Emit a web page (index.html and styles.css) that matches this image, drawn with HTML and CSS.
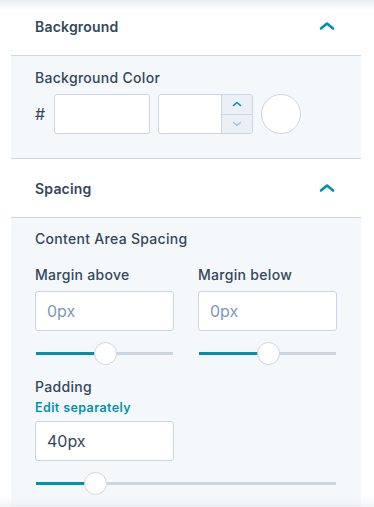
FILE: index.html
```html
<!DOCTYPE html>
<html lang="en">
<head>
    <meta charset="UTF-8">
    <meta name="viewport" content="width=device-width, initial-scale=1.0">
    <title>Module Styles</title>
    <link rel="stylesheet" href="styles.css">
</head>
<body>
    <div class="panel">
        <section class="group">
            <div class="group-head">
                <span>Background</span>
                <svg class="chevron" viewBox="0 0 16 16"><path d="M2 10.5 L8 5.5 L14 10.5"/></svg>
            </div>
            <div class="group-body">
                <div class="field-label">Background Color</div>
                <div class="color-row">
                    <span class="hash">#</span>
                    <input class="text-input hex" type="text">
                    <div class="number-input">
                        <input type="text">
                        <div class="stepper">
                            <span class="step up"><svg viewBox="0 0 12 12"><path d="M2.5 7.5 L6 4.5 L9.5 7.5"/></svg></span>
                            <span class="step down"><svg viewBox="0 0 12 12"><path d="M2.5 4.5 L6 7.5 L9.5 4.5"/></svg></span>
                        </div>
                    </div>
                    <span class="swatch"></span>
                </div>
            </div>
        </section>
        <section class="group">
            <div class="group-head">
                <span>Spacing</span>
                <svg class="chevron" viewBox="0 0 16 16"><path d="M2 10.5 L8 5.5 L14 10.5"/></svg>
            </div>
            <div class="group-body">
                <div class="field-label">Content Area Spacing</div>
                <div class="two-col">
                    <div class="col">
                        <div class="field-label">Margin above</div>
                        <input class="text-input" type="text" placeholder="0px">
                        <div class="slider">
                            <div class="track"><div class="fill" style="width: 50%"></div></div>
                            <div class="thumb" style="left: 50%"></div>
                        </div>
                    </div>
                    <div class="col">
                        <div class="field-label">Margin below</div>
                        <input class="text-input" type="text" placeholder="0px">
                        <div class="slider">
                            <div class="track"><div class="fill" style="width: 50%"></div></div>
                            <div class="thumb" style="left: 50%"></div>
                        </div>
                    </div>
                </div>
                <div class="field-label padding-label">Padding</div>
                <a class="edit-link" href="#">Edit separately</a>
                <input class="text-input narrow" type="text" value="40px">
                <div class="slider">
                    <div class="track"><div class="fill" style="width: 19.7%"></div></div>
                    <div class="thumb" style="left: 19.7%"></div>
                </div>
            </div>
        </section>
    </div>
    <div class="fade-top"></div>
    <div class="fade-bottom"></div>
</body>
</html>
```

FILE: styles.css
```css
body {
    margin: 0;
    background: #fff;
    font-family: Inter, "Noto Sans", Arial, sans-serif;
    color: #33475b;
    overflow: hidden;
}
.panel {
    margin: -3px 13px 0 11px;
    width: 350px;
}
.group-head {
    height: 58px;
    display: flex;
    align-items: center;
    justify-content: space-between;
    padding: 0 26px 0 24px;
    border-bottom: 1px solid #cbd6e2;
    font-size: 14px;
    font-weight: 600;
    letter-spacing: 0.2px;
}
.chevron {
    width: 16px;
    height: 16px;
}
.chevron path {
    fill: none;
    stroke: #0091ae;
    stroke-width: 2.6;
    stroke-linecap: round;
    stroke-linejoin: round;
}
.group-body {
    background: #f5f8fa;
    border-bottom: 1px solid #cbd6e2;
    padding: 12px 24px 24px;
}
.field-label {
    font-size: 14px;
    font-weight: 500;
    line-height: 20px;
    letter-spacing: 0.3px;
    margin-bottom: 6px;
}
.color-row {
    display: flex;
    align-items: center;
    gap: 8px;
}
.hash {
    width: 11px;
    font-size: 16px;
}
.text-input {
    display: block;
    box-sizing: border-box;
    height: 40px;
    width: 100%;
    border: 1px solid #cbd6e2;
    border-radius: 3px;
    background: #fff;
    padding: 0 11px;
    font-family: inherit;
    font-size: 16px;
    font-weight: 400;
    color: #33475b;
    outline: none;
}
.text-input::placeholder {
    color: #7c98b6;
}
.text-input.hex {
    width: 96px;
}
.text-input.narrow {
    width: 139px;
}
.number-input {
    display: flex;
    box-sizing: border-box;
    width: 95px;
    height: 40px;
    border: 1px solid #cbd6e2;
    border-radius: 3px;
    background: #fff;
    overflow: hidden;
}
.number-input input {
    flex: 1;
    min-width: 0;
    border: none;
    outline: none;
    background: transparent;
}
.stepper {
    width: 30px;
    display: flex;
    flex-direction: column;
    background: #eaf0f6;
    border-left: 1px solid #cbd6e2;
}
.step {
    flex: 1;
    display: flex;
    align-items: center;
    justify-content: center;
}
.step.up {
    border-bottom: 1px solid #cbd6e2;
}
.step svg {
    width: 12px;
    height: 12px;
}
.step path {
    fill: none;
    stroke-width: 1.6;
    stroke-linecap: round;
    stroke-linejoin: round;
}
.step.up path {
    stroke: #0091ae;
}
.step.down path {
    stroke: #b0c1d4;
}
.swatch {
    box-sizing: border-box;
    width: 40px;
    height: 40px;
    border-radius: 50%;
    border: 1px solid #cbd6e2;
    background: #fff;
}
.group:last-child .group-body {
    padding-top: 11px;
    padding-bottom: 11px;
}
.group:last-child .group-body > .field-label:first-child {
    margin-bottom: 16px;
}
.two-col {
    display: grid;
    grid-template-columns: 139px 139px;
    gap: 24px;
}
.slider {
    position: relative;
    height: 22px;
    margin-top: 11px;
    margin-right: 1px;
    margin-left: 1px;
}
.track {
    position: absolute;
    left: 0;
    right: 0;
    top: 10px;
    height: 3px;
    background: #cbd6e2;
}
.fill {
    height: 100%;
    background: #0091ae;
}
.thumb {
    position: absolute;
    top: 0;
    box-sizing: border-box;
    width: 23px;
    height: 23px;
    margin-left: -11px;
    border-radius: 50%;
    background: #fff;
    border: 1px solid #cbd6e2;
}
.padding-label {
    margin-top: 13px;
    margin-bottom: 0;
}
.edit-link {
    display: block;
    margin-top: 3px;
    margin-bottom: 5px;
    font-size: 12.5px;
    line-height: 16px;
    font-weight: 600;
    letter-spacing: 0.4px;
    color: #0091ae;
    text-decoration: none;
}
.fade-top {
    position: fixed;
    left: 0;
    right: 0;
    top: 0;
    height: 10px;
    background: linear-gradient(rgba(223, 230, 237, 0.7), rgba(255, 255, 255, 0));
}
.fade-bottom {
    position: fixed;
    left: 0;
    right: 0;
    bottom: 0;
    height: 12px;
    background: linear-gradient(rgba(255, 255, 255, 0), rgba(238, 242, 246, 0.8));
}
```
